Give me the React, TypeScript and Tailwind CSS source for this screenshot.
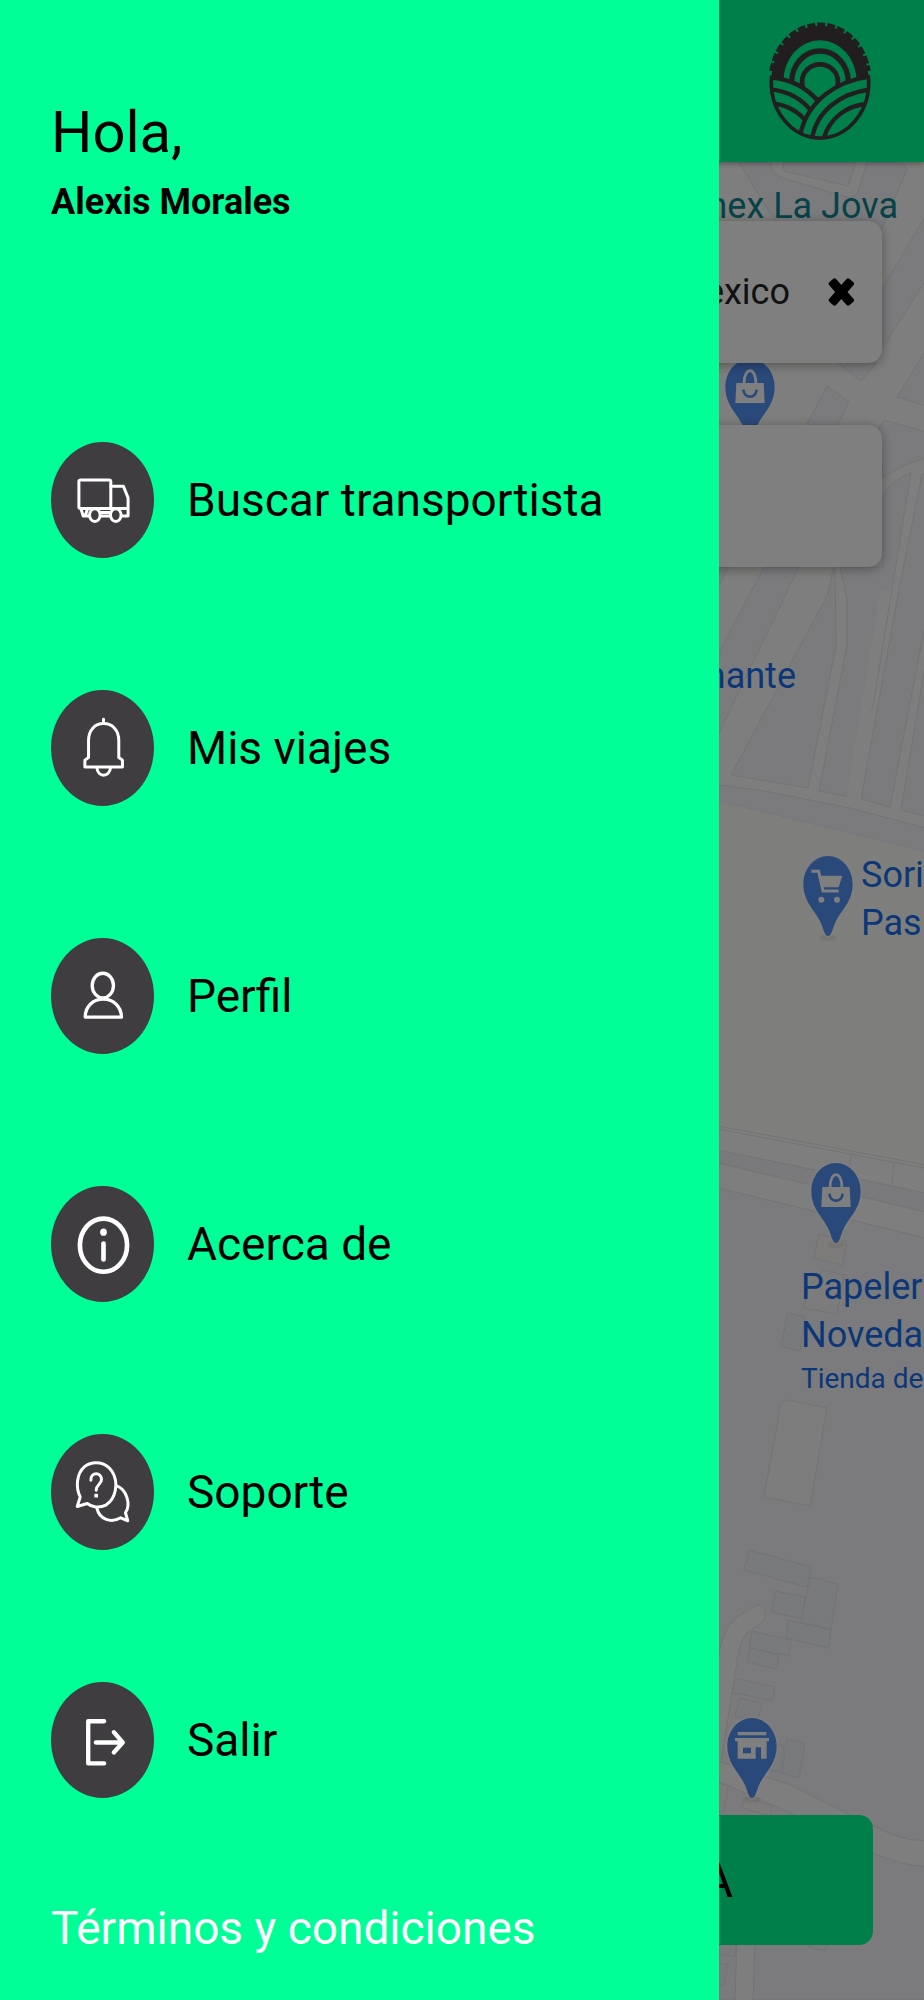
import React from "react";

const INK = "#443d3f";
const BRAND = "#00ff97";

function Logo() {
  return (
    <svg viewBox="200 60 324 360" className="h-[120px] w-[108px]" role="img" aria-label="Logo">
      <defs>
        <clipPath id="wheel">
          <ellipse cx="362" cy="241" rx="150" ry="172" />
        </clipPath>
      </defs>
      <ellipse cx="362" cy="241" rx="146" ry="167" fill={INK} />
      <path
        d="M217 210 A147 166 0 0 1 507 210"
        fill="none"
        stroke={INK}
        strokeWidth="14"
        strokeDasharray="24 6"
      />
      <ellipse cx="362" cy="241" rx="110" ry="123" fill={BRAND} />
      <ellipse cx="362" cy="243" rx="85" ry="93" fill="none" stroke={INK} strokeWidth="16" />
      <ellipse cx="362" cy="243" rx="54" ry="53" fill="none" stroke={INK} strokeWidth="14" />
      <g clipPath="url(#wheel)" strokeWidth="13" stroke={INK}>
        <path d="M205 229 C270 232 320 255 360 305 L400 430 L200 430 Z" fill={BRAND} />
        <path d="M212 265 C270 270 310 295 340 335" fill="none" />
        <path d="M222 308 C265 312 300 335 325 366" fill="none" />
        <path d="M520 226 C410 238 325 300 303 400 L320 440 L530 440 Z" fill={BRAND} />
        <path d="M515 265 C425 275 350 330 338 415" fill="none" />
        <path d="M505 309 C440 312 390 355 373 412" fill="none" />
      </g>
      <path
        d="M217 225 A146 167 0 1 0 507 225"
        fill="none"
        stroke={INK}
        strokeWidth="11"
      />
    </svg>
  );
}

function MapPin({ x, y, children }: { x: number; y: number; children: React.ReactNode }) {
  return (
    <g transform={`translate(${x} ${y}) scale(0.3333)`}>
      <ellipse cx="0" cy="245" rx="26" ry="10" fill="#000000" opacity="0.06" />
      <path
        d="M0 0 C-41 0 -74 38 -74 84 C-74 137 -40 162 -23 197 C-13 217 -11 240 0 240 C11 240 13 217 23 197 C40 162 74 137 74 84 C74 38 41 0 0 0 Z"
        fill="#5592f6"
        stroke="#ffffff"
        strokeOpacity="0.6"
        strokeWidth="12"
        paintOrder="stroke"
      />
      {children}
    </g>
  );
}

function BagGlyph() {
  return (
    <g>
      <path d="M-41 72 H41 L44 132 H-44 Z" fill="#ffffff" />
      <path d="M-18 74 C-18 22 18 22 18 74" fill="none" stroke="#ffffff" strokeWidth="8" />
      <path d="M-20 92 C-18 120 18 120 20 92" fill="none" stroke="#5592f6" strokeWidth="8" />
    </g>
  );
}

function MapDrawing() {
  return (
    <svg
      viewBox="718 0 206 2000"
      preserveAspectRatio="xMaxYMin slice"
      className="absolute right-0 top-0 h-[2000px] w-[206px]"
      aria-hidden="true"
    >
      <rect x="718" width="206" height="2000" fill="#fdfdfc" />
      <g fill="#f7f7fb" stroke="#e6e6e9" strokeWidth="1">
        <path d="M739 162 L765 205 L790 240 H877 L907 170 L902 162 H867 L858 192 Q855 198 846 197 L783 178 Q770 174 771 162 Z" />
        <path d="M783 162 L784 171 L848 186 L856 162 Z" />
        <path d="M926 215 L883 287 V347 L926 280 Z" />
        <path d="M838 363 L861 381 L877 363 Z" />
        <path d="M926 350 L897 397 L926 406 Z" />
        <path d="M827 386 L849 402 L836 428 H805 Z" />
        <path d="M879 428 L884 420 L926 432 V458 Q900 465 883 478 Z" />
        <path d="M883 494 Q895 478 911 473 L874 700 L850 797 L819 791 L847 645 L847 600 L840 567 H883 Z" />
        <path d="M718 567 H729 L718 587 Z" />
        <path d="M764 567 H799 L718 735 V654 Z" />
        <path d="M731 775 L828 594 L835 560 L836 646 L808 788 Z" />
        <path d="M922 474 L897 600 L861 799 L890 807 L926 620 V474 Z" />
        <path d="M926 660 L901 810 L926 816 Z" />
        <path d="M718 785 L765 791 L850 808 L926 828 V852 L718 801 Z" />
      </g>
      <path d="M886 590 L852 798" fill="none" stroke="#fdfdfc" strokeWidth="10" />
      <path d="M718 801 L926 852 V1168 L718 1126 Z" fill="#fdfcf8" />
      <path
        d="M718 1129 L924 1168 M718 1126 L926 1165 M852 1153 L849 1169 M894 1163 L892 1185"
        stroke="#e6e6e9"
        fill="none"
      />
      <g stroke="#e6e6e9" strokeWidth="1">
        <path d="M718 1150 L926 1193 V1212 L718 1163 Z" fill="#f5f5fb" />
        <path d="M718 1188 L926 1238 V2000 H718 Z" fill="#f7f7fa" />
        <path d="M819 1234 L847 1242 L842 1265 L814 1258 Z" fill="#fbf9f5" />
        <path d="M823 1270 L844 1275 L837 1314 L804 1308 L808 1290 Z" fill="#f8f9f8" />
        <path d="M788 1313 L805 1317 L800 1351 L781 1346 Z" fill="#f2f4f7" />
        <path d="M781 1403 L788 1400 L827 1408 L810 1506 L764 1497 Z" fill="#f9fbf9" />
        <g fill="#f2f4f7">
          <path d="M749 1550 L811 1567 L807 1587 L744 1570 Z" />
          <path d="M810 1577 L838 1584 L831 1629 L801 1622 Z" />
          <path d="M775 1591 L805 1597 L802 1619 L772 1612 Z" />
          <path d="M788 1620 L831 1630 L828 1648 L786 1638 Z" />
          <path d="M752 1631 L791 1640 L789 1656 L749 1648 Z" />
          <path d="M750 1648 L779 1655 L777 1669 L747 1662 Z" />
          <path d="M730 1677 L775 1687 L772 1701 L729 1692 Z" />
          <path d="M740 1698 L762 1703 L758 1720 L735 1716 Z" />
          <path d="M787 1739 L805 1743 L799 1778 L782 1773 Z" />
          <path d="M774 1744 L784 1745 L781 1772 L769 1770 Z" />
        </g>
        <path
          d="M718 1660 Q722 1625 742 1614 L755 1606 Q762 1603 765 1610 Q767 1619 760 1624 L748 1632 Q740 1640 738 1655 L721 1762 L770 1778 Q792 1784 820 1800 L878 1828 Q900 1840 926 1841 V1867 Q900 1865 873 1853 L820 1826 L718 1781 Z"
          fill="#fdfdfd"
        />
        <path
          d="M718 1782 L728 1786 L724 1812 H718 Z M744 1797 L772 1806 L770 1816 L742 1808 Z"
          fill="#fbf9f5"
        />
        <path d="M737 1940 H755 L753 2001 H735 Z" fill="#fdfdfd" />
        <path
          d="M718 1945 H736 L735 1957 L718 1954 Z M718 1964 L728 1964 L724 1985 H718 Z M808 1944 L828 1945 L825 1951 L809 1947 Z"
          fill="#f2f4f7"
        />
      </g>
      <MapPin x={750} y={359}>
        <BagGlyph />
      </MapPin>
      <MapPin x={828} y={856}>
        <path
          d="M-50 46 H-28 L-15 105 H32"
          fill="none"
          stroke="#ffffff"
          strokeWidth="9"
        />
        <path d="M-24 59 H43 L32 94 H-15 Z" fill="#ffffff" />
        <circle cx="-20" cy="131" r="9" fill="#ffffff" />
        <circle cx="27" cy="131" r="9" fill="#ffffff" />
      </MapPin>
      <MapPin x={836} y={1163}>
        <BagGlyph />
      </MapPin>
      <MapPin x={752} y={1718}>
        <path
          d="M-43 42 H43 V52 H-43 Z M-51 60 H51 V70 H44 V122 H27 V88 H11 V122 H-43 V70 H-51 Z"
          fill="#ffffff"
        />
        <path d="M-27 89 H-3 V106 H-27 Z" fill="#5592f6" />
      </MapPin>
    </svg>
  );
}

function MapLabels() {
  return (
    <div className="absolute right-0 top-0 w-[206px] whitespace-nowrap text-[36px] leading-[48px] text-[#166ff0]">
      <p className="absolute right-[26px] top-[182px] text-[#0b8791]">Pemex La Jova</p>
      <p className="absolute right-[128px] top-[652px]">Diamante</p>
      <p className="absolute left-[143px] top-[851px]">
        Sori
        <br />
        Pas
      </p>
      <p className="absolute left-[83px] top-[1263px]">
        Papeler
        <br />
        Noveda
        <span className="block text-[28px] leading-[40px]">Tienda de</span>
      </p>
    </div>
  );
}

const menu = [
  {
    label: "Buscar transportista",
    viewBox: "64 68 308 349",
    icon: (
      <g strokeWidth="9">
        <rect x="147" y="182" width="96" height="86" rx="5" />
        <path d="M243 201 H281 L295 236 V268 H243 M153 268 L160 291 H178 M213 291 H240 M276 291 H295 V268 M160 268 H180 M210 268 H240 M172 272 L166 290 M213 280 H240" />
        <ellipse cx="195" cy="288" rx="16" ry="19" fill="#3f3d40" />
        <ellipse cx="258" cy="288" rx="16" ry="19" fill="#3f3d40" />
      </g>
    ),
  },
  {
    label: "Mis viajes",
    viewBox: "64 811 308 349",
    icon: (
      <g strokeWidth="9">
        <path d="M221 899 V911 M176 1014 V963 C176 932 195 912 221 912 C248 912 267 932 267 963 V1014 L278 1022 V1043 H165 V1022 Z" />
        <path d="M201 1044 C203 1075 240 1075 242 1044" />
      </g>
    ),
  },
  {
    label: "Perfil",
    viewBox: "64 54 308 349",
    icon: (
      <g strokeWidth="10">
        <ellipse cx="219" cy="197" rx="32" ry="37" />
        <path d="M166 292 C166 220 274 220 275 292 Z" />
      </g>
    ),
  },
  {
    label: "Acerca de",
    viewBox: "64 797 308 349",
    icon: (
      <g>
        <ellipse cx="221" cy="975" rx="71" ry="80" strokeWidth="14" />
        <path d="M221 970 V1018" strokeWidth="14" />
        <ellipse cx="221" cy="936" rx="10" ry="11" fill="#ffffff" stroke="none" />
      </g>
    ),
  },
  {
    label: "Soporte",
    viewBox: "64 40 308 349",
    icon: (
      <g strokeWidth="9">
        <path d="M142 258 L151 229 C137 202 139 160 164 138 C192 117 230 126 247 153 C268 187 258 236 228 254 C208 264 186 260 172 249 Z" />
        <path d="M261 196 C291 207 304 252 287 277 L294 301 L273 292 C244 309 209 298 201 263" />
        <path d="M183 179 C183 153 215 154 215 178 C215 191 199 192 199 209" />
        <path d="M199 220 V231" strokeWidth="11" strokeLinecap="butt" />
      </g>
    ),
  },
  {
    label: "Salir",
    viewBox: "64 783 308 349",
    icon: (
      <g strokeWidth="13">
        <path d="M223 901 H175 V1028 H223" />
        <path d="M198 965 H279 M252 934 L279 965 L252 995" />
      </g>
    ),
  },
];

function Drawer() {
  return (
    <aside className="absolute inset-y-0 left-0 flex w-[77.8%] flex-col bg-[#00ff97] pb-10 pl-[51px] pt-[100px] text-black">
      <p className="text-[58px] leading-[64px]">Hola,</p>
      <h1 className="mt-4 text-[36px] font-bold leading-[44px]">Alexis Morales</h1>
      <nav aria-label="Menú" className="mt-[218px]">
        <ul className="flex flex-col gap-[132px]">
          {menu.map((item) => (
            <li key={item.label}>
              <a
                href="#"
                className="flex items-center gap-[33px] whitespace-nowrap text-[46px] leading-[56px]"
              >
                <span className="h-[116px] w-[103px] shrink-0 rounded-[50%] bg-[#3f3d40]">
                  <svg
                    viewBox={item.viewBox}
                    className="h-full w-full"
                    fill="none"
                    stroke="#ffffff"
                    strokeLinecap="round"
                    strokeLinejoin="round"
                    aria-hidden="true"
                  >
                    {item.icon}
                  </svg>
                </span>
                {item.label}
              </a>
            </li>
          ))}
        </ul>
      </nav>
      <a href="#" className="mt-auto text-[46px] leading-[64px] text-white">
        Términos y condiciones
      </a>
    </aside>
  );
}

export default function App() {
  return (
    <div className="relative flex min-h-screen flex-col overflow-hidden bg-[#f7f7fa] font-[Roboto,sans-serif]">
      <MapDrawing />
      <MapLabels />
      <header className="relative flex h-[162px] items-center justify-end bg-[#00ff97] pr-[50px] shadow-[0_2px_5px_rgba(0,0,0,0.3)]">
        <Logo />
      </header>
      <main className="relative flex flex-1 flex-col px-[42px] pb-[55px] pt-[59px]">
        <div className="flex h-[142px] items-center justify-end rounded-[14px] bg-white pr-[27px] text-[36px] text-[#222222] shadow-[0_2px_12px_rgba(0,0,0,0.35)]">
          <span>Mexico</span>
          <button type="button" aria-label="Borrar" className="ml-[38px]">
            <svg viewBox="387 236 81 90" className="h-[30px] w-[27px]" aria-hidden="true">
              <rect x="381" y="267" width="92" height="28" rx="7" transform="rotate(49 427 281)" />
              <rect x="381" y="267" width="92" height="28" rx="7" transform="rotate(-49 427 281)" />
            </svg>
          </button>
        </div>
        <input
          aria-label="Destino"
          className="mt-[62px] h-[142px] rounded-[14px] bg-white px-8 text-[36px] shadow-[0_2px_12px_rgba(0,0,0,0.35)]"
        />
        <button
          type="button"
          className="mx-[9px] mt-auto h-[130px] rounded-[14px] bg-[#00ff97] pr-[140px] text-right text-[50px] text-black"
        >
          BUSCAR RUTA
        </button>
      </main>
      <div className="absolute inset-0 bg-black/50" />
      <Drawer />
    </div>
  );
}
